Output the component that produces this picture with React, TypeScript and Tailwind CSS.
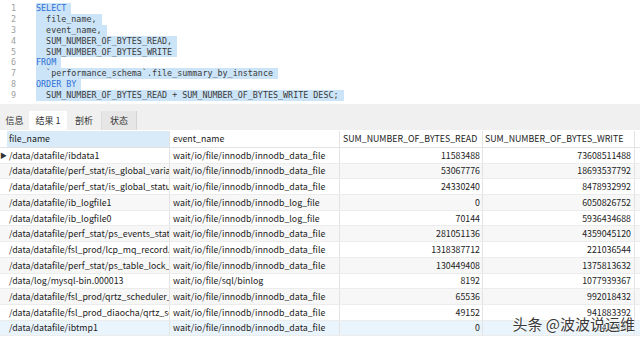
import React from "react";

const rows = [
  ["/data/datafile/ibdata1", "wait/io/file/innodb/innodb_data_file", "11583488", "73608511488"],
  ["/data/datafile/perf_stat/is_global_varia", "wait/io/file/innodb/innodb_data_file", "53067776", "18693537792"],
  ["/data/datafile/perf_stat/is_global_statu", "wait/io/file/innodb/innodb_data_file", "24330240", "8478932992"],
  ["/data/datafile/ib_logfile1", "wait/io/file/innodb/innodb_log_file", "0", "6050826752"],
  ["/data/datafile/ib_logfile0", "wait/io/file/innodb/innodb_log_file", "70144", "5936434688"],
  ["/data/datafile/perf_stat/ps_events_stat", "wait/io/file/innodb/innodb_data_file", "281051136", "4359045120"],
  ["/data/datafile/fsl_prod/lcp_mq_record.", "wait/io/file/innodb/innodb_data_file", "1318387712", "221036544"],
  ["/data/datafile/perf_stat/ps_table_lock_w", "wait/io/file/innodb/innodb_data_file", "130449408", "1375813632"],
  ["/data/log/mysql-bin.000013", "wait/io/file/sql/binlog", "8192", "1077939367"],
  ["/data/datafile/fsl_prod/qrtz_scheduler_", "wait/io/file/innodb/innodb_data_file", "65536", "992018432"],
  ["/data/datafile/fsl_prod_diaocha/qrtz_sc", "wait/io/file/innodb/innodb_data_file", "49152", "941883392"],
  ["/data/datafile/ibtmp1", "wait/io/file/innodb/innodb_data_file", "0", "9437184"],
];

// sql lines: [indent, text, isKeyword]
const code: [number, string, boolean][] = [
  [0, "SELECT", true],
  [2, "file_name,", false],
  [2, "event_name,", false],
  [2, "SUM_NUMBER_OF_BYTES_READ,", false],
  [2, "SUM_NUMBER_OF_BYTES_WRITE", false],
  [0, "FROM", true],
  [2, "`performance_schema`.file_summary_by_instance", false],
  [0, "ORDER BY", true],
  [2, "SUM_NUMBER_OF_BYTES_READ + SUM_NUMBER_OF_BYTES_WRITE DESC;", false],
];

export default function App() {
  return (
    <div className="relative w-[640px] h-[343px] overflow-hidden bg-white">
      {/* editor */}
      <div className="h-[104px] pt-[3px] font-['DejaVu_Sans_Mono',monospace] text-[8.4px] leading-[10.9px]">
        {code.map(([indent, text, kw], i) => (
          <div key={i} className="flex h-[10.9px]">
            <div className="w-[36px] pl-[11px] text-[#a0a0a0]">{i + 1}</div>
            <div className="bg-[#cce4f7] whitespace-pre pr-[5px]">
              <span className={kw ? "text-[#2f6fd6]" : "text-[#3a3a3a]"}>
                {" ".repeat(indent) + text}
              </span>
            </div>
          </div>
        ))}
      </div>

      {/* tabs */}
      <div className="h-[26px] bg-[#f0f0f0] flex items-end font-['Noto_Sans_CJK_SC',sans-serif] text-[9px] text-[#333]">
        <div className="h-[19px] w-[29px] flex items-center justify-center">信息</div>
        <div className="h-[19px] w-[38px] flex items-center justify-center bg-white">结果 1</div>
        <div className="h-[19px] w-[35px] flex items-center justify-center border-r border-[#dcdcdc]">剖析</div>
        <div className="h-[19px] w-[35px] flex items-center justify-center bg-[#e6e6e6] border-r border-[#d4d4d4]">状态</div>
      </div>

      {/* grid */}
      <div className="font-['Noto_Sans_CJK_SC',sans-serif] text-[8.8px] text-[#222] pt-[1px]">
        <div className="flex h-[17px] border-b border-[#e3e3e3]">
          <div className="w-[7px]" />
          <div className="w-[163px] bg-[#d9ebf9] pl-[2px] flex items-center border-r border-[#e3e3e3]">file_name</div>
          <div className="w-[170px] pl-[3px] flex items-center border-r border-[#e3e3e3]">event_name</div>
          <div className="w-[143px] pl-[3px] flex items-center border-r border-[#e3e3e3]">SUM_NUMBER_OF_BYTES_READ</div>
          <div className="w-[152px] pl-[2px] flex items-center border-r border-[#e3e3e3]">SUM_NUMBER_OF_BYTES_WRITE</div>
        </div>
        {rows.map((r, i) => (
          <div
            key={i}
            className={`flex h-[15.7px] border-b border-[#ececec] ${
              i === rows.length - 1 ? "bg-[#eaf4fc]" : i % 2 === 1 ? "bg-[#f7f7f7]" : "bg-white"
            }`}
          >
            <div className="w-[7px] flex items-center text-[7px] text-[#333]">{i === 0 ? "▶" : ""}</div>
            <div className="w-[163px] pl-[2px] flex items-center overflow-hidden whitespace-nowrap border-r border-[#e3e3e3]">{r[0]}</div>
            <div className="w-[170px] pl-[3px] flex items-center overflow-hidden whitespace-nowrap border-r border-[#e3e3e3]">{r[1]}</div>
            <div className="w-[143px] pr-[2px] flex items-center justify-end border-r border-[#e3e3e3]">{r[2]}</div>
            <div className="w-[152px] pr-[3px] flex items-center justify-end border-r border-[#e3e3e3]">{r[3]}</div>
          </div>
        ))}
      </div>

      {/* watermark */}
      <div className="absolute right-[5px] bottom-[8px] font-['Noto_Sans_CJK_SC',sans-serif] text-[15px] text-[#3a3a3a] [text-shadow:0_0_2px_#fff,0_0_2px_#fff,0_0_3px_#fff]">
        头条 @波波说运维
      </div>
    </div>
  );
}
